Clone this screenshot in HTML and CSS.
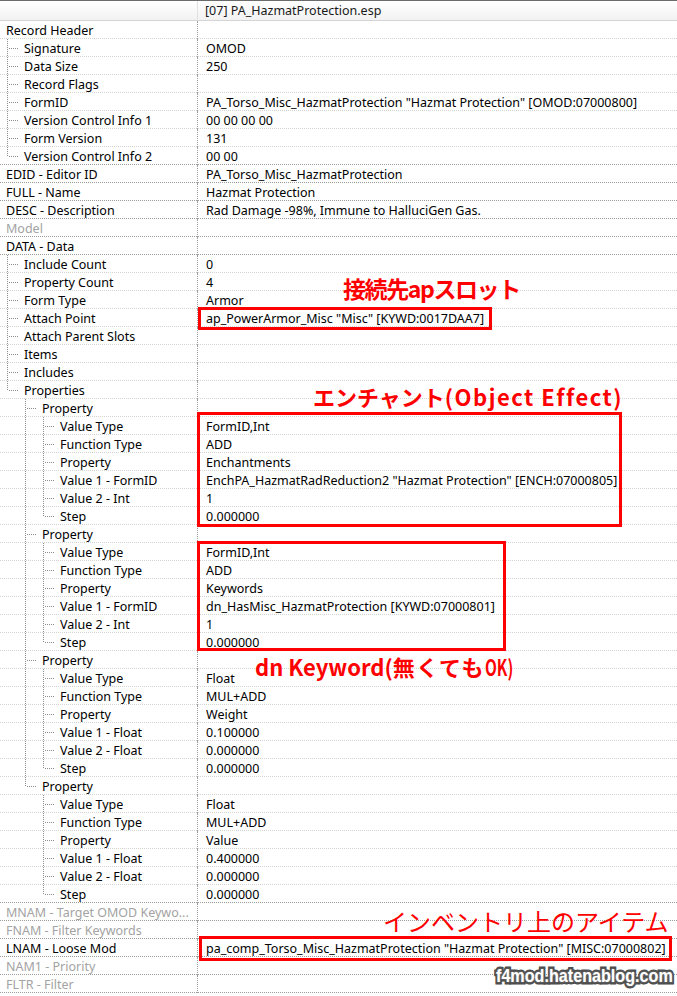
FILE: index.html
```html
<!DOCTYPE html>
<html>
<head>
<meta charset="utf-8">
<link rel="stylesheet" href="styles.css">
</head>
<body>
<div class="tree">
  <div class="hdr"><div class="hk"></div><div class="hv">[07] PA_HazmatProtection.esp</div></div>

  <div class="row"><div class="k"><span class="t">Record Header</span></div><div class="v"></div></div>
  <div class="row"><div class="k"><i class="g g-t"></i><span class="t">Signature</span></div><div class="v">OMOD</div></div>
  <div class="row"><div class="k"><i class="g g-t"></i><span class="t">Data Size</span></div><div class="v">250</div></div>
  <div class="row"><div class="k"><i class="g g-t"></i><span class="t">Record Flags</span></div><div class="v"></div></div>
  <div class="row"><div class="k"><i class="g g-t"></i><span class="t">FormID</span></div><div class="v">PA_Torso_Misc_HazmatProtection "Hazmat Protection" [OMOD:07000800]</div></div>
  <div class="row"><div class="k"><i class="g g-t"></i><span class="t">Version Control Info 1</span></div><div class="v">00 00 00 00</div></div>
  <div class="row"><div class="k"><i class="g g-t"></i><span class="t">Form Version</span></div><div class="v">131</div></div>
  <div class="row dk"><div class="k"><i class="g g-l"></i><span class="t">Version Control Info 2</span></div><div class="v">00 00</div></div>
  <div class="row dk"><div class="k"><span class="t">EDID - Editor ID</span></div><div class="v">PA_Torso_Misc_HazmatProtection</div></div>
  <div class="row dk"><div class="k"><span class="t">FULL - Name</span></div><div class="v">Hazmat Protection</div></div>
  <div class="row dk"><div class="k"><span class="t">DESC - Description</span></div><div class="v">Rad Damage -98%, Immune to HalluciGen Gas.</div></div>
  <div class="row dk"><div class="k"><span class="t off">Model</span></div><div class="v"></div></div>
  <div class="row dk"><div class="k"><span class="t">DATA - Data</span></div><div class="v"></div></div>
  <div class="row"><div class="k"><i class="g g-t"></i><span class="t">Include Count</span></div><div class="v">0</div></div>
  <div class="row"><div class="k"><i class="g g-t"></i><span class="t">Property Count</span></div><div class="v">4</div></div>
  <div class="row"><div class="k"><i class="g g-t"></i><span class="t">Form Type</span></div><div class="v">Armor</div></div>
  <div class="row"><div class="k"><i class="g g-t"></i><span class="t">Attach Point</span></div><div class="v">ap_PowerArmor_Misc "Misc" [KYWD:0017DAA7]</div></div>
  <div class="row"><div class="k"><i class="g g-t"></i><span class="t">Attach Parent Slots</span></div><div class="v"></div></div>
  <div class="row"><div class="k"><i class="g g-t"></i><span class="t">Items</span></div><div class="v"></div></div>
  <div class="row"><div class="k"><i class="g g-t"></i><span class="t">Includes</span></div><div class="v"></div></div>
  <div class="row"><div class="k"><i class="g g-l"></i><span class="t">Properties</span></div><div class="v"></div></div>

  <div class="row"><div class="k"><i class="g g-e"></i><i class="g g-t"></i><span class="t">Property</span></div><div class="v"></div></div>
  <div class="row"><div class="k"><i class="g g-e"></i><i class="g g-v"></i><i class="g g-t"></i><span class="t">Value Type</span></div><div class="v">FormID,Int</div></div>
  <div class="row"><div class="k"><i class="g g-e"></i><i class="g g-v"></i><i class="g g-t"></i><span class="t">Function Type</span></div><div class="v">ADD</div></div>
  <div class="row"><div class="k"><i class="g g-e"></i><i class="g g-v"></i><i class="g g-t"></i><span class="t">Property</span></div><div class="v">Enchantments</div></div>
  <div class="row"><div class="k"><i class="g g-e"></i><i class="g g-v"></i><i class="g g-t"></i><span class="t">Value 1 - FormID</span></div><div class="v">EnchPA_HazmatRadReduction2 "Hazmat Protection" [ENCH:07000805]</div></div>
  <div class="row"><div class="k"><i class="g g-e"></i><i class="g g-v"></i><i class="g g-t"></i><span class="t">Value 2 - Int</span></div><div class="v">1</div></div>
  <div class="row"><div class="k"><i class="g g-e"></i><i class="g g-v"></i><i class="g g-l"></i><span class="t">Step</span></div><div class="v">0.000000</div></div>

  <div class="row"><div class="k"><i class="g g-e"></i><i class="g g-t"></i><span class="t">Property</span></div><div class="v"></div></div>
  <div class="row"><div class="k"><i class="g g-e"></i><i class="g g-v"></i><i class="g g-t"></i><span class="t">Value Type</span></div><div class="v">FormID,Int</div></div>
  <div class="row"><div class="k"><i class="g g-e"></i><i class="g g-v"></i><i class="g g-t"></i><span class="t">Function Type</span></div><div class="v">ADD</div></div>
  <div class="row"><div class="k"><i class="g g-e"></i><i class="g g-v"></i><i class="g g-t"></i><span class="t">Property</span></div><div class="v">Keywords</div></div>
  <div class="row"><div class="k"><i class="g g-e"></i><i class="g g-v"></i><i class="g g-t"></i><span class="t">Value 1 - FormID</span></div><div class="v">dn_HasMisc_HazmatProtection [KYWD:07000801]</div></div>
  <div class="row"><div class="k"><i class="g g-e"></i><i class="g g-v"></i><i class="g g-t"></i><span class="t">Value 2 - Int</span></div><div class="v">1</div></div>
  <div class="row"><div class="k"><i class="g g-e"></i><i class="g g-v"></i><i class="g g-l"></i><span class="t">Step</span></div><div class="v">0.000000</div></div>

  <div class="row"><div class="k"><i class="g g-e"></i><i class="g g-t"></i><span class="t">Property</span></div><div class="v"></div></div>
  <div class="row"><div class="k"><i class="g g-e"></i><i class="g g-v"></i><i class="g g-t"></i><span class="t">Value Type</span></div><div class="v">Float</div></div>
  <div class="row"><div class="k"><i class="g g-e"></i><i class="g g-v"></i><i class="g g-t"></i><span class="t">Function Type</span></div><div class="v">MUL+ADD</div></div>
  <div class="row"><div class="k"><i class="g g-e"></i><i class="g g-v"></i><i class="g g-t"></i><span class="t">Property</span></div><div class="v">Weight</div></div>
  <div class="row"><div class="k"><i class="g g-e"></i><i class="g g-v"></i><i class="g g-t"></i><span class="t">Value 1 - Float</span></div><div class="v">0.100000</div></div>
  <div class="row"><div class="k"><i class="g g-e"></i><i class="g g-v"></i><i class="g g-t"></i><span class="t">Value 2 - Float</span></div><div class="v">0.000000</div></div>
  <div class="row"><div class="k"><i class="g g-e"></i><i class="g g-v"></i><i class="g g-l"></i><span class="t">Step</span></div><div class="v">0.000000</div></div>

  <div class="row"><div class="k"><i class="g g-e"></i><i class="g g-l"></i><span class="t">Property</span></div><div class="v"></div></div>
  <div class="row"><div class="k"><i class="g g-e"></i><i class="g g-e"></i><i class="g g-t"></i><span class="t">Value Type</span></div><div class="v">Float</div></div>
  <div class="row"><div class="k"><i class="g g-e"></i><i class="g g-e"></i><i class="g g-t"></i><span class="t">Function Type</span></div><div class="v">MUL+ADD</div></div>
  <div class="row"><div class="k"><i class="g g-e"></i><i class="g g-e"></i><i class="g g-t"></i><span class="t">Property</span></div><div class="v">Value</div></div>
  <div class="row"><div class="k"><i class="g g-e"></i><i class="g g-e"></i><i class="g g-t"></i><span class="t">Value 1 - Float</span></div><div class="v">0.400000</div></div>
  <div class="row"><div class="k"><i class="g g-e"></i><i class="g g-e"></i><i class="g g-t"></i><span class="t">Value 2 - Float</span></div><div class="v">0.000000</div></div>
  <div class="row dk"><div class="k"><i class="g g-e"></i><i class="g g-e"></i><i class="g g-l"></i><span class="t">Step</span></div><div class="v">0.000000</div></div>

  <div class="row dk"><div class="k"><span class="t off">MNAM - Target OMOD Keywo...</span></div><div class="v"></div></div>
  <div class="row dk"><div class="k"><span class="t off">FNAM - Filter Keywords</span></div><div class="v"></div></div>
  <div class="row dk"><div class="k"><span class="t">LNAM - Loose Mod</span></div><div class="v">pa_comp_Torso_Misc_HazmatProtection "Hazmat Protection" [MISC:07000802]</div></div>
  <div class="row dk"><div class="k"><span class="t off">NAM1 - Priority</span></div><div class="v"></div></div>
  <div class="row dk"><div class="k"><span class="t off">FLTR - Filter</span></div><div class="v"></div></div>

  <div class="box box-a"></div>
  <div class="box box-b"></div>
  <div class="box box-c"></div>
  <div class="box box-d"></div>

  <div class="ann ann-1">接続先apスロット</div>
  <div class="ann ann-2">エンチャント<span class="lat2">(Object Effect)</span></div>
  <div class="ann ann-3">dn Keyword(<span class="jp3">無くても</span><span class="ok3">OK)</span></div>
  <div class="ann ann-4">インベントリ上のアイテム</div>

  <div class="mark">f4mod.hatenablog.com</div>
</div>
</body>
</html>
```

FILE: styles.css
```css
html, body {
  margin: 0;
  padding: 0;
  background: #ffffff;
}

body {
  font-family: "Noto Sans", "DejaVu Sans", sans-serif;
  font-size: 12.5px;
  color: #000000;
}

.tree {
  position: relative;
  width: 677px;
}

.hdr {
  display: grid;
  grid-template-columns: 198px 1fr;
  height: 21px;
  box-sizing: border-box;
  border-top: 1px solid #6b6b6b;
  border-bottom: 1px solid #d5d5d5;
  background: linear-gradient(#ffffff, #f2f2f2);
}

.hk {
  border-right: 1px solid #e2e2e2;
}

.hv {
  padding-left: 7px;
  line-height: 20px;
  color: #1a1a1a;
  white-space: nowrap;
}

.row {
  display: grid;
  grid-template-columns: 198px 1fr;
  height: 18px;
  background-image: repeating-linear-gradient(90deg, #d4d4d4 0 1px, transparent 1px 2px);
  background-position: left bottom;
  background-size: 100% 1px;
  background-repeat: no-repeat;
}

.row.dk {
  background-image: repeating-linear-gradient(90deg, #9c9c9c 0 1px, transparent 1px 2px);
}

.k {
  display: flex;
  align-items: flex-start;
  box-sizing: border-box;
  border-right: 1px dotted #a0a0a0;
  white-space: nowrap;
  overflow: hidden;
}

.t {
  padding-left: 6px;
  padding-top: 1px;
  line-height: 17px;
}

.t.off {
  color: #a3a3a3;
}

.v {
  padding-left: 8px;
  padding-top: 1px;
  line-height: 17px;
  white-space: nowrap;
  overflow: hidden;
}

.g {
  position: relative;
  flex: none;
  width: 18px;
  height: 18px;
}

.g::before,
.g::after {
  content: "";
  position: absolute;
}

.g-v::before,
.g-t::before {
  left: 7px;
  top: 0;
  width: 1px;
  height: 18px;
  background: repeating-linear-gradient(180deg, #8c8c8c 0 1px, transparent 1px 2px);
}

.g-l::before {
  left: 7px;
  top: 0;
  width: 1px;
  height: 10px;
  background: repeating-linear-gradient(180deg, #8c8c8c 0 1px, transparent 1px 2px);
}

.g-t::after,
.g-l::after {
  left: 9px;
  top: 9px;
  width: 9px;
  height: 1px;
  background: repeating-linear-gradient(90deg, #8c8c8c 0 1px, transparent 1px 2px);
}

.box {
  position: absolute;
  box-sizing: border-box;
  border: 3px solid #ff0000;
}

.box-a { left: 198px; top: 307px; width: 294px; height: 23px; }
.box-b { left: 197px; top: 412px; width: 425px; height: 115px; }
.box-c { left: 197px; top: 541px; width: 309px; height: 110px; }
.box-d { left: 199px; top: 936px; width: 473px; height: 25px; }

.ann {
  position: absolute;
  color: #ff0000;
  font-family: "Noto Sans CJK JP", sans-serif;
  font-weight: 700;
  font-size: 22px;
  line-height: 1;
  white-space: nowrap;
}

.ann-1 { left: 343px; top: 277px; font-size: 23px; letter-spacing: -1.4px; }
.ann-2 { left: 313px; top: 385px; }
.lat2 { letter-spacing: 1.5px; }
.ann-3 { left: 255px; top: 655px; }
.jp3 { letter-spacing: 1.5px; }
.ok3 {
  display: inline-block;
  transform: scaleX(0.7);
  transform-origin: left center;
}
.ann-4 { left: 383px; top: 909px; font-size: 24px; font-weight: 400; }

.mark {
  position: absolute;
  left: 496px;
  top: 964px;
  font-family: "Liberation Sans", sans-serif;
  font-weight: 700;
  font-size: 19px;
  line-height: 24px;
  color: #ffffff;
  white-space: nowrap;
  transform: scaleX(0.85);
  transform-origin: left center;
  -webkit-text-stroke: 5px #4d4d4d;
  paint-order: stroke fill;
  text-shadow: 0 0 2px #9a9a9a;
}
```
